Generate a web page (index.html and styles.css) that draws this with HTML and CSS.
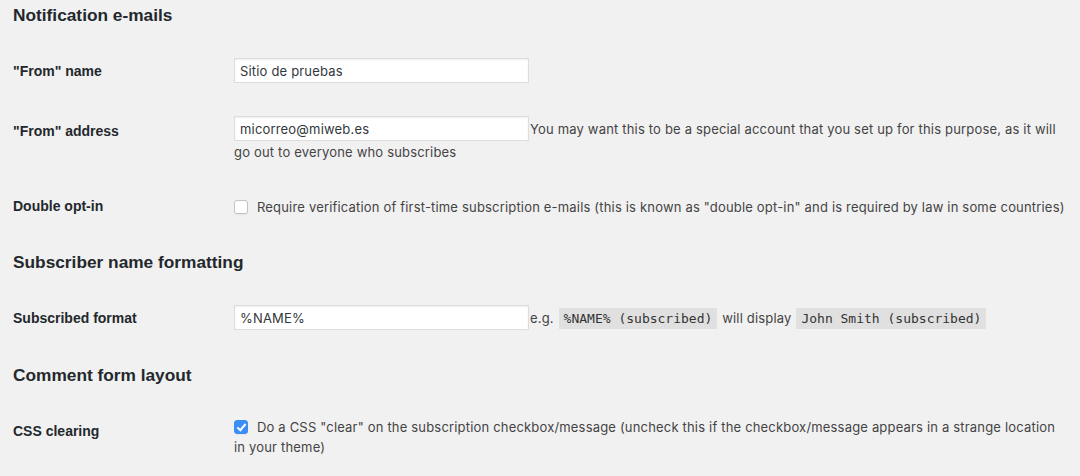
FILE: index.html
```html
<!DOCTYPE html>
<html lang="en">
<head>
<meta charset="utf-8">
<title>Subscribe settings</title>
<link rel="stylesheet" href="styles.css">
</head>
<body>
<div class="wrap">
  <h2 class="section-title">Notification e-mails</h2>
  <div class="form-row">
    <div class="form-label">"From" name</div>
    <div class="form-field"><input class="text-input" type="text" value="Sitio de pruebas"></div>
  </div>
  <div class="form-row">
    <div class="form-label">"From" address</div>
    <div class="form-field form-field--wrap"><input class="text-input" type="text" value="micorreo@miweb.es">You may want this to be a special account that you set up for this purpose, as it will go out to everyone who subscribes</div>
  </div>
  <div class="form-row">
    <div class="form-label">Double opt-in</div>
    <div class="form-field form-field--check"><label><input class="check" type="checkbox">Require verification of first-time subscription e-mails (this is known as "double opt-in" and is required by law in some countries)</label></div>
  </div>

  <h2 class="section-title">Subscriber name formatting</h2>
  <div class="form-row">
    <div class="form-label">Subscribed format</div>
    <div class="form-field"><input class="text-input" type="text" value="%NAME%">e.g. <code class="code">%NAME% (subscribed)</code> will display <code class="code">John Smith (subscribed)</code></div>
  </div>

  <h2 class="section-title">Comment form layout</h2>
  <div class="form-row">
    <div class="form-label">CSS clearing</div>
    <div class="form-field form-field--check"><label><input class="check" type="checkbox" checked>Do a CSS "clear" on the subscription checkbox/message (uncheck this if the checkbox/message appears in a strange location in your theme)</label></div>
  </div>
</div>
</body>
</html>
```

FILE: styles.css
```css
html, body {
  margin: 0;
  padding: 0;
  background: #f1f1f1;
}

body {
  font-family: Inter, "Liberation Sans", Arial, sans-serif;
  font-size: 13px;
  color: #444;
}

.wrap {
  display: flex;
  flex-direction: column;
  padding: 6px 12px 0 13px;
}

.section-title {
  margin: 16px 0 18px;
  font-family: "Liberation Sans", Arial, Helvetica, sans-serif;
  font-size: 17.3px;
  line-height: 18px;
  font-weight: bold;
  color: #23282d;
}

.section-title:first-child {
  margin-top: 0;
}

.form-row {
  display: flex;
}

.form-label {
  flex: none;
  width: 221px;
  box-sizing: border-box;
  padding: 20px 0 22px;
  align-self: flex-start;
  font-family: "Liberation Sans", Arial, Helvetica, sans-serif;
  font-size: 14px;
  line-height: 18.2px;
  font-weight: bold;
  color: #23282d;
}

.form-field {
  flex: 1;
  min-width: 0;
  align-self: flex-start;
  padding: 15px 0;
  font-size: 13px;
  line-height: 20px;
  letter-spacing: 0.18px;
  color: #444;
}

.form-field--wrap {
  padding-top: 13px;
}

.form-field--check {
  align-self: center;
}

.text-input {
  box-sizing: border-box;
  width: 295px;
  height: 25px;
  margin: 1px 1px 1px 0;
  padding: 3px 5px;
  border: 1px solid #ddd;
  border-radius: 0;
  background: #fff;
  box-shadow: inset 0 1px 2px rgba(0, 0, 0, 0.07);
  font-family: Inter, "Liberation Sans", Arial, sans-serif;
  font-size: 13px;
  letter-spacing: 0.18px;
  color: #32373c;
  outline: none;
}

.code {
  margin: 0 1px;
  padding: 3px 5px 3px;
  background: rgba(0, 0, 0, 0.07);
  font-family: "DejaVu Sans Mono", "Liberation Mono", monospace;
  font-size: 13px;
  letter-spacing: 0;
  color: #333;
}

.check {
  -webkit-appearance: none;
  appearance: none;
  position: relative;
  box-sizing: border-box;
  width: 14px;
  height: 14px;
  margin: 0 9px 0 0;
  vertical-align: -2px;
  border: 1px solid #c3c3c3;
  border-radius: 3px;
  background: #fff;
  box-shadow: 0 1px 1px rgba(0, 0, 0, 0.05);
}

.check:checked {
  border-color: #3a8ef6;
  background: #3a8ef6;
}

.check:checked::after {
  content: "";
  position: absolute;
  left: 3.5px;
  top: 1px;
  width: 3px;
  height: 7px;
  border-right: 2px solid #fff;
  border-bottom: 2px solid #fff;
  transform: rotate(40deg);
}
```
